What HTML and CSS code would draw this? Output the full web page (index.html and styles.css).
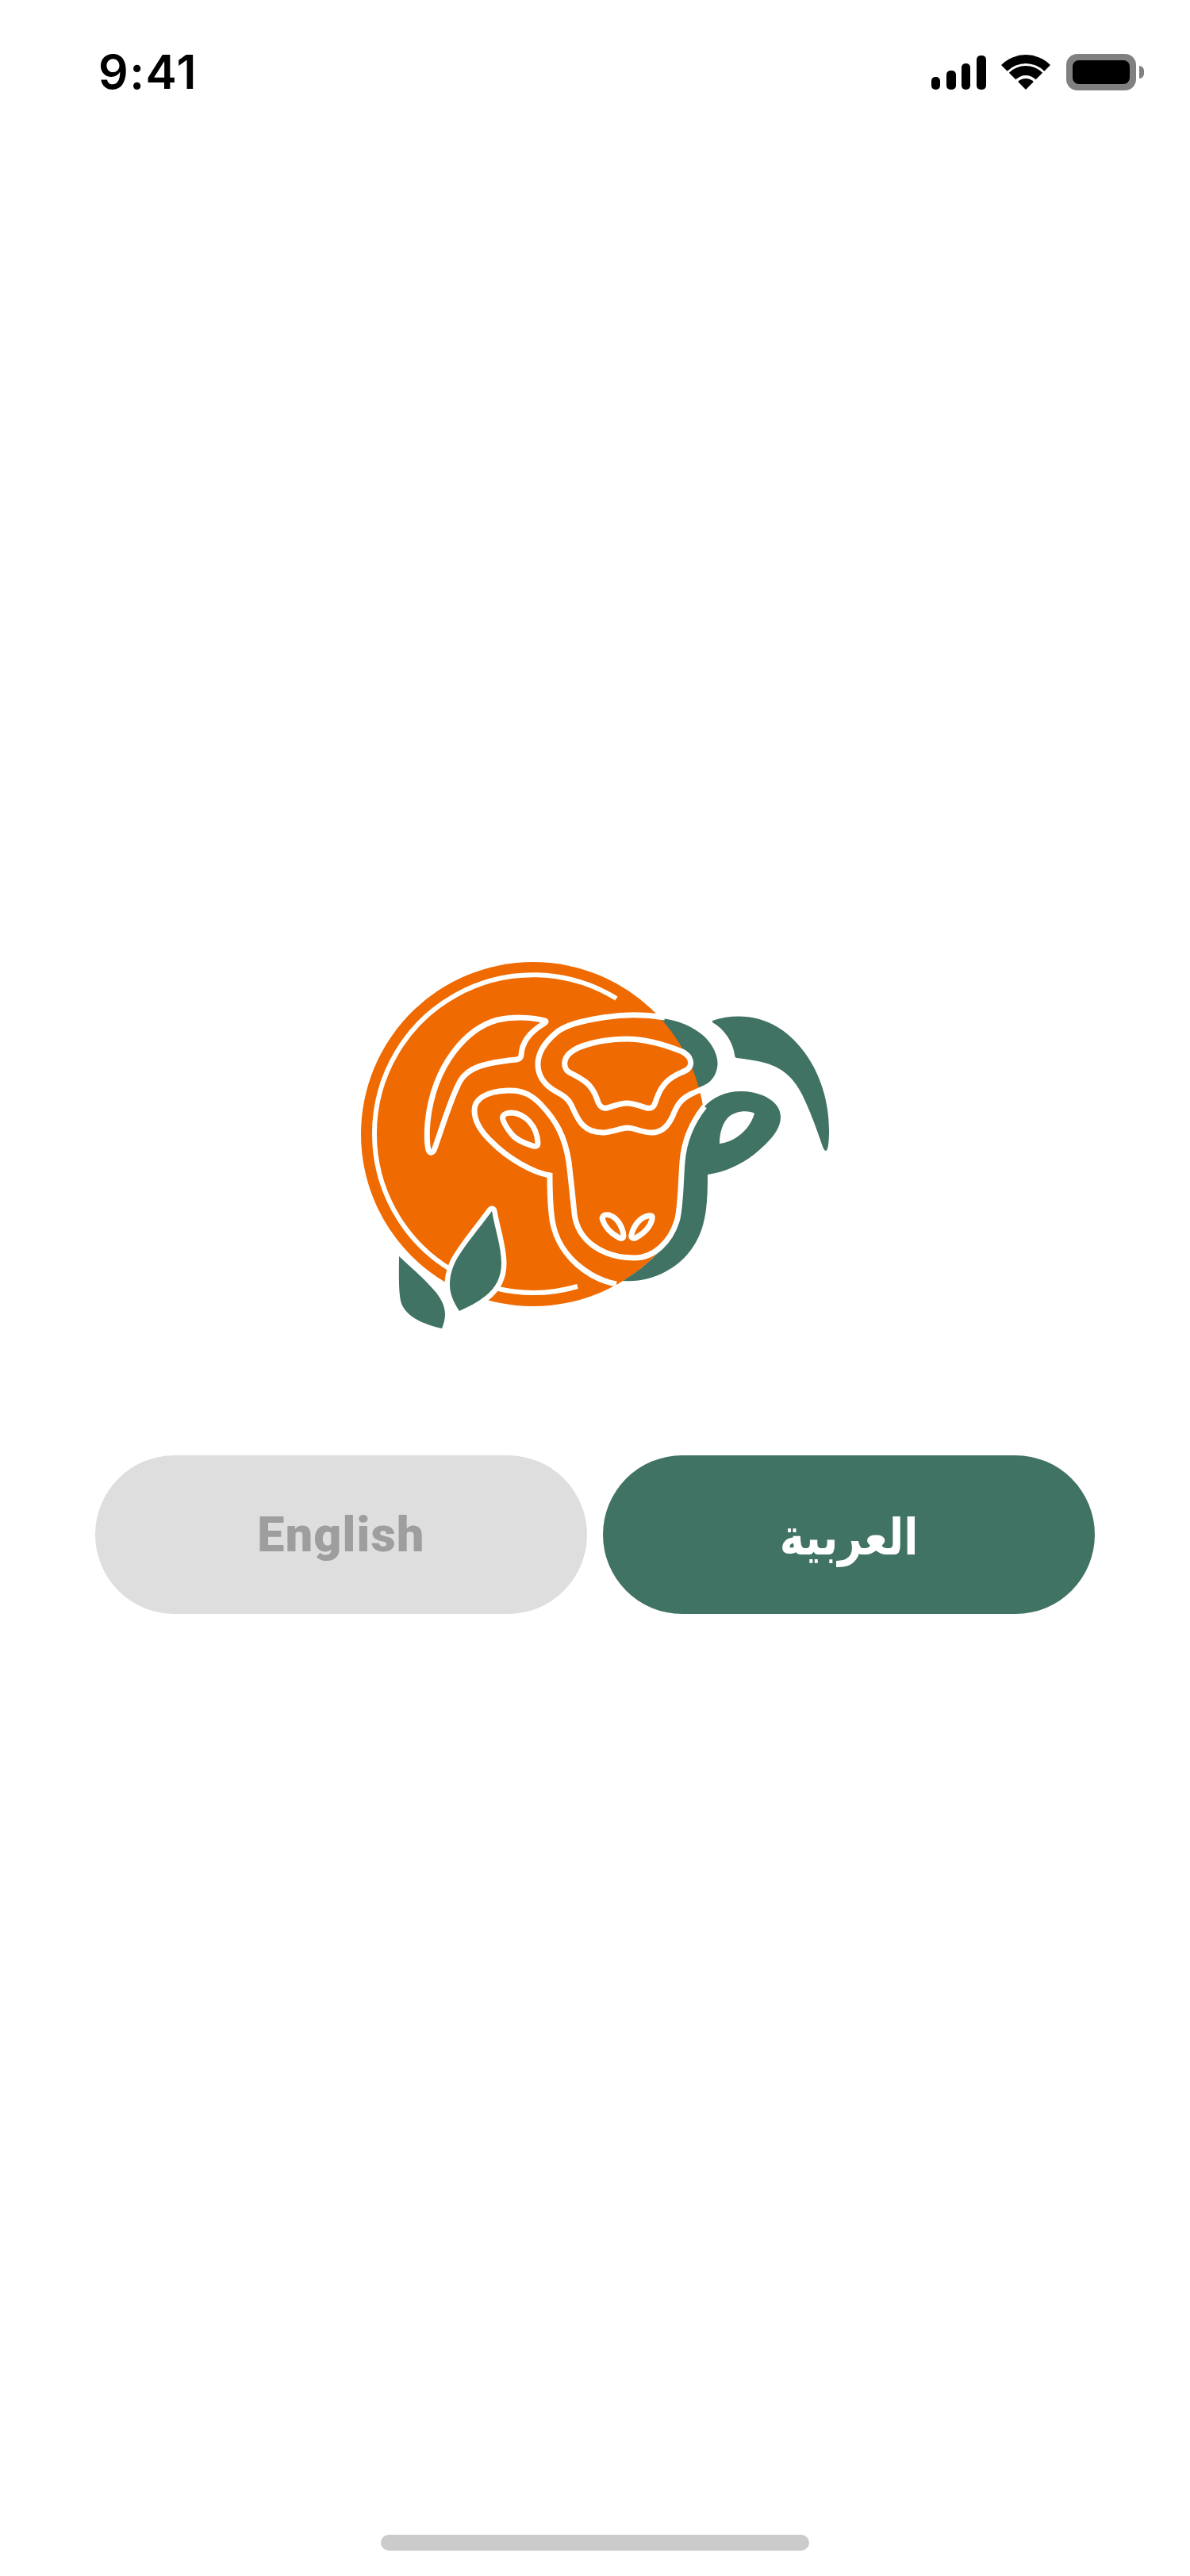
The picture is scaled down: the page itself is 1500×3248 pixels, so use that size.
FILE: index.html
```html
<!DOCTYPE html>
<html lang="en">

<head>
    <meta charset="UTF-8">
    <meta name="viewport" content="width=device-width, initial-scale=1.0">
    <title>Language</title>
    <link rel="stylesheet" href="styles.css">
</head>

<body>
    <div class="screen">
        <div class="status">
            <span class="time">9:41</span>
            <div class="status-icons">
                <svg class="signal" width="69" height="43" viewBox="0 0 69 43">
                    <rect x="0" y="27" width="11" height="16" rx="5"/>
                    <rect x="19" y="19" width="12" height="24" rx="5"/>
                    <rect x="38" y="10" width="11" height="33" rx="5"/>
                    <rect x="57" y="0" width="12" height="43" rx="5"/>
                </svg>
                <svg class="wifi" width="62" height="44" viewBox="0 0 62 44">
                    <path d="M0 12.9A44 44 0 0 1 62 12.9L54.3 20.7A33 33 0 0 0 7.7 20.7Z"/>
                    <path d="M9.8 22.8A30 30 0 0 1 52.2 22.8L43.7 31.3A18 18 0 0 0 18.3 31.3Z"/>
                    <path d="M21.1 34.1A14 14 0 0 1 40.9 34.1L31 44Z"/>
                </svg>
                <div class="battery">
                    <div class="battery-body"><div class="battery-fill"></div></div>
                    <div class="battery-cap"></div>
                </div>
            </div>
        </div>

        <!-- coordinates in the viewBox are page pixels -->
        <svg class="logo" width="600" height="480" viewBox="450 1205 600 480">
            <g class="green">
                <path d="M898 1287C925 1278 955 1280 980 1295C1015 1316 1045 1365 1045 1425C1045 1445 1043 1451 1041 1451C1039 1451 1037 1446 1036 1443C1028 1420 1020 1398 1011 1380C1000 1358 985 1345 960 1339C950 1337 940 1335 929 1334C927 1334 926 1332 926 1330C924 1315 914 1298 898 1289Z"/>
                <path d="M833 1284C855 1286 875 1295 888 1307C899 1318 905 1331 904.500 1342C904 1352 899 1362 890 1367C885 1370 880 1372 870 1376L800 1330Z"/>
            </g>
            <circle class="orange" cx="672" cy="1430" r="217"/>
            <path class="green" fill-rule="evenodd" d="M888 1395C900 1382 918 1375 937 1376C962 1377 984 1390 984 1408C984 1424 972 1438 950 1456C933 1469 913 1478 892 1481C892 1520 890 1548 873 1573C855 1600 820 1618 785 1615A217 217 0 0 0 832 1577Q846 1562 853 1540C858 1525 858 1490 860 1465C862 1440 872 1415 888 1395ZM951 1404C945 1400 930 1400 920 1407C911 1414 907 1428 907 1442C915 1441 922 1438 927 1435C938 1428 947 1418 951 1404Z"/>

            <g class="line">
                <path class="line-thin" d="M777 1259A200 200 0 0 0 472 1430A200 200 0 0 0 567 1600"/>
                <path class="line-thin" d="M624 1624A200 200 0 0 0 728 1622"/>
                <path d="M687 1287C668 1282 645 1282 627 1286C590 1296 547 1340 539 1415C538 1428 538 1442 540 1450C542 1455 546 1454 548 1448C558 1420 568 1385 580 1363C590 1346 610 1340 651 1336C656 1335 657 1333 657 1330C658 1312 670 1300 685 1291Q690 1288 687 1287Z"/>
                <path d="M838 1283C820 1280 790 1278 760 1283C735 1287 712 1292 700 1303C685 1316 678 1328 678 1342C678 1355 685 1366 697 1374C707 1380 715 1383 720 1393C727 1407 732 1428 760 1428C772 1428 782 1422 791 1422C800 1422 808 1428 822 1428C835 1428 843 1418 848 1407C853 1394 858 1386 870 1380C878 1376 885 1373 892 1371"/>
                <path d="M790 1310C812 1310 840 1318 860 1326C872 1332 873 1343 867 1348C862 1352 855 1353 848 1358C835 1366 830 1378 826 1390C824 1397 820 1398 815 1397C806 1394 798 1391 790 1391C781 1391 773 1395 765 1397C760 1398 756 1395 754 1390C750 1377 745 1368 735 1362C727 1356 720 1354 716 1351C710 1346 710 1335 718 1328C728 1318 760 1310 790 1310Z"/>
                <path class="line-miter" d="M777 1619C760 1616 742 1607 727 1594C705 1574 697 1553 695 1530C693 1510 693 1500 693 1482C670 1478 640 1460 620 1440C605 1426 598 1412 598 1400C598 1386 612 1376 640 1375C660 1374 672 1382 683 1394C700 1412 712 1432 717 1465C720 1490 722 1510 724 1530C728 1565 760 1586 800 1586C825 1586 845 1565 853 1540C858 1525 858 1490 860 1465C862 1440 872 1415 888 1395"/>
                <path d="M634 1412C632 1406 637 1403 645 1403C662 1404 677 1420 678 1441C678 1445 676 1446 672 1445C660 1441 650 1437 645 1430C640 1424 636 1418 634 1412Z"/>
                <path d="M759 1536C760 1532 764 1531 768 1532C778 1535 785 1547 786 1558C786 1561 784 1562 781 1561C772 1556 762 1548 759 1536Z"/>
                <path d="M822 1537C823 1533 821 1532 817 1533C806 1535 798 1547 796 1557C795 1561 798 1562 801 1561C812 1555 820 1546 822 1537Z"/>
            </g>

            <path class="leaf-edge" d="M620 1527C624 1550 632 1572 632 1593C632 1610 625 1624 612 1634C602 1642 590 1648 579 1653C572 1642 567 1632 567 1620C567 1608 570 1600 573 1593C582 1574 605 1548 620 1527Z"/>
            <path class="green" d="M620 1527C624 1550 632 1572 632 1593C632 1610 625 1624 612 1634C602 1642 590 1648 579 1653C572 1642 567 1632 567 1620C567 1608 570 1600 573 1593C582 1574 605 1548 620 1527Z"/>
            <path class="green" d="M503 1584C520 1600 535 1612 550 1630C557 1639 561 1648 561 1657C561 1664 559 1670 557 1675C530 1669 509 1658 505 1640C502 1625 503 1600 503 1584Z"/>
        </svg>

        <div class="lang">
            <button class="lang-btn lang-en">English</button>
            <button class="lang-btn lang-ar" lang="ar"><span class="lang-ar-text">العربية</span></button>
        </div>

        <div class="home-bar"></div>
    </div>
</body>

</html>
```

FILE: styles.css
```css
* {
    margin: 0;
    padding: 0;
    box-sizing: border-box;
}

body {
    background-color: #fff;
}

.screen {
    width: 1500px;
    height: 3248px;
    display: flex;
    flex-direction: column;
    overflow: hidden;
}

.status {
    display: flex;
    justify-content: space-between;
    align-items: center;
    height: 46px;
    margin-top: 68px;
    padding: 0 58px 0 124px;
}

.time {
    font-family: "Inter", "Liberation Sans", sans-serif;
    font-size: 59px;
    font-weight: 600;
    line-height: 46px;
    letter-spacing: 1.5px;
    color: #000;
}

.status-icons {
    display: flex;
    align-items: center;
    gap: 19px;
}

.signal,
.wifi {
    display: block;
    fill: #000;
}

.battery {
    display: flex;
    align-items: center;
    gap: 4px;
    margin-left: 1px;
}

.battery-body {
    width: 88px;
    height: 46px;
    padding: 8px;
    border-radius: 14px;
    background-color: #808080;
}

.battery-fill {
    width: 100%;
    height: 100%;
    border-radius: 8px;
    background-color: #000;
}

.battery-cap {
    width: 6px;
    height: 16px;
    border-radius: 0 8px 8px 0;
    background-color: #808080;
}

.logo {
    display: block;
    align-self: center;
    margin-top: 1091px;
}

.green {
    fill: #407363;
}

.orange {
    fill: #ef6a00;
}

.line {
    fill: none;
    stroke: #fff;
    stroke-width: 7;
    stroke-linejoin: round;
}

.line-thin {
    stroke-width: 6;
}

.line-miter {
    stroke-linejoin: miter;
}

.leaf-edge {
    fill: none;
    stroke: #fff;
    stroke-width: 13;
    stroke-linejoin: round;
}

.lang {
    display: flex;
    gap: 20px;
    margin-top: 150px;
    padding: 0 120px;
}

.lang-btn {
    flex: 1;
    height: 200px;
    border: none;
    border-radius: 100px;
    font-family: "Roboto", "DejaVu Sans", sans-serif;
    font-size: 61px;
    font-weight: 900;
}

.lang-en {
    background-color: #dedede;
    color: #9e9e9e;
    letter-spacing: 1.2px;
}

.lang-ar {
    background-color: #407363;
    color: #fff;
}

.lang-ar-text {
    display: inline-block;
    margin-bottom: 4px;
    font-family: "DejaVu Sans", sans-serif;
    font-size: 53px;
    font-weight: 700;
    transform: scaleY(1.2);
}

.home-bar {
    width: 540px;
    height: 20px;
    margin: auto auto 32px;
    border-radius: 10px;
    background-color: #cbcbcb;
}
```
